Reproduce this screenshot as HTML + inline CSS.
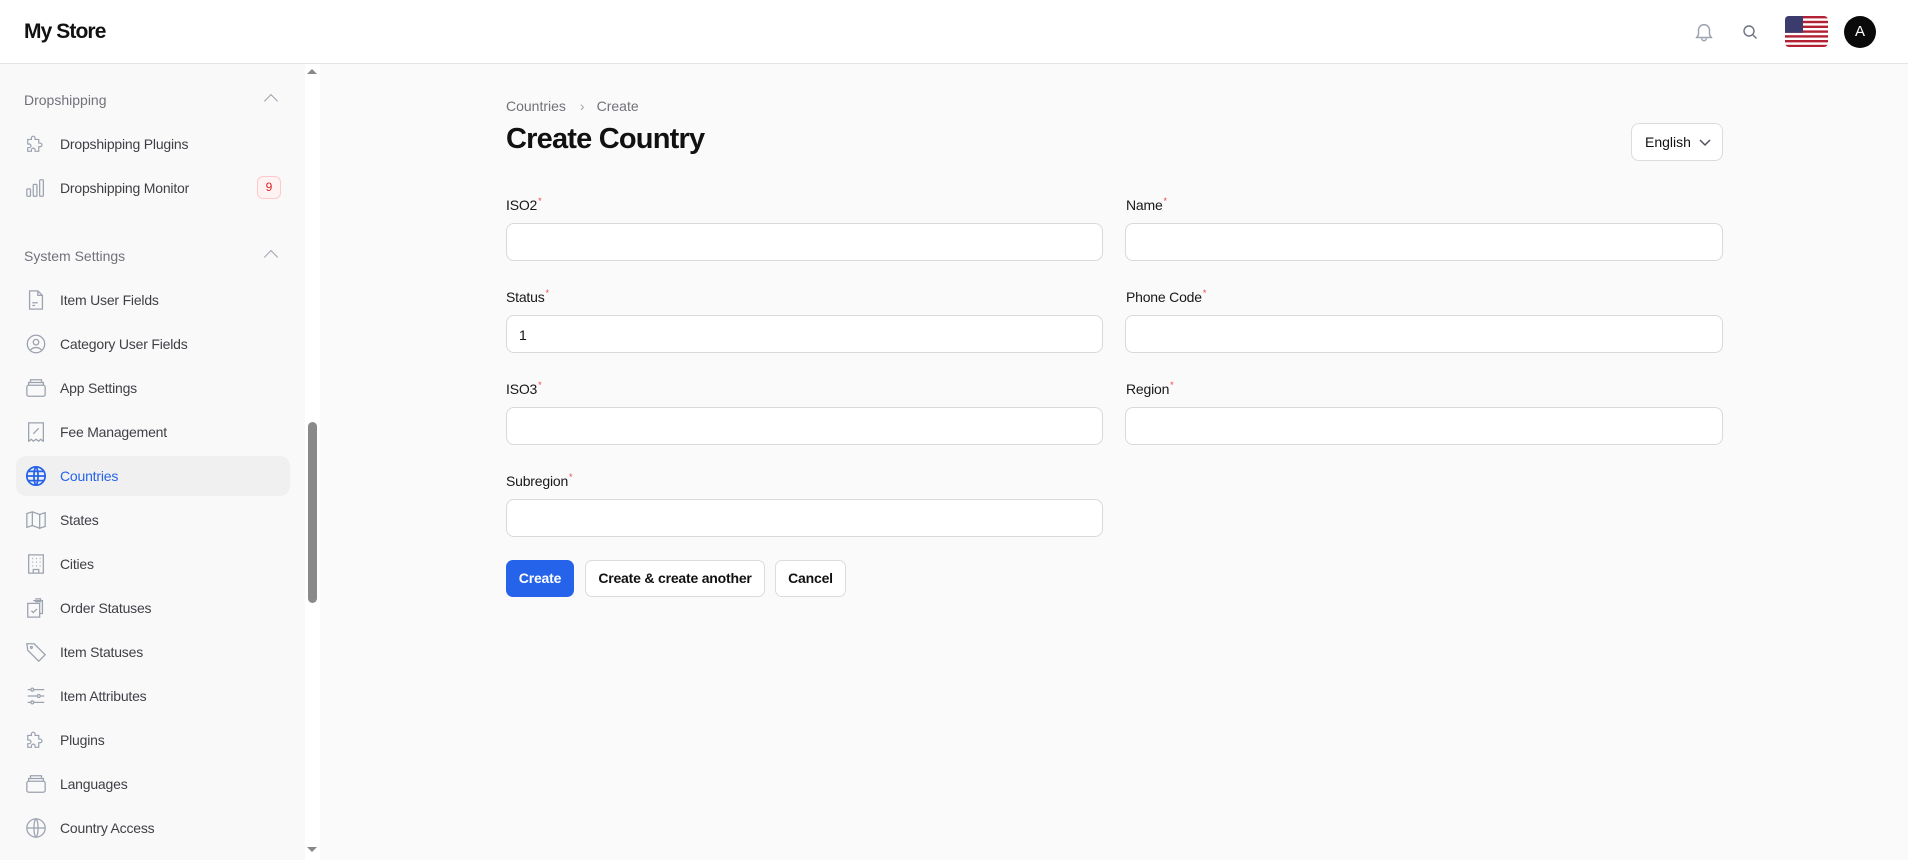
<!DOCTYPE html>
<html><head><meta charset="utf-8"><style>
*{box-sizing:border-box;margin:0;padding:0}
body{width:1908px;height:860px;overflow:hidden;background:#fafafa;font-family:"Liberation Sans",sans-serif;color:#111;position:relative}
.hdr{position:absolute;left:0;top:0;width:1908px;height:64px;background:#fff;border-bottom:1px solid #e4e4e7}
.logo{position:absolute;left:24px;top:20px;font-size:21px;font-weight:bold;letter-spacing:-0.9px}
.side{position:absolute;left:0;top:64px;width:305px;height:796px;background:#f9f9f9}
.track{position:absolute;left:305px;top:64px;width:15px;height:796px;background:#fff}
.thumb{position:absolute;left:308px;top:422px;width:9px;height:181px;border-radius:5px;background:#8a8a8a}
.sec{position:absolute;left:24px;font-size:14px;color:#71717a}
.chev{position:absolute;left:266px;width:10px;height:10px;border-left:1.5px solid #9ca3af;border-top:1.5px solid #9ca3af;transform:rotate(45deg)}
.it{position:absolute;left:60px;font-size:14px;color:#3f3f46;letter-spacing:-0.2px}
.ic{position:absolute;left:25px;width:22px;height:22px}
.act{position:absolute;left:16px;top:456px;width:274px;height:40px;border-radius:10px;background:#f0f0f0}
.badge{position:absolute;left:257px;top:176px;width:24px;height:23px;border:1px solid #fecaca;background:#fef2f2;border-radius:6px;color:#dc2626;font-size:12px;text-align:center;line-height:21px}
.lbl{position:absolute;font-size:14px;color:#18181b;letter-spacing:-0.2px}
.lbl sup{color:#ef4444;font-size:9px;vertical-align:6px;margin-left:1px}
.inp{position:absolute;height:38px;background:#fff;border:1px solid #d9d9dc;border-radius:8px;font-size:14px;padding:11px 12px}
.btn{position:absolute;top:560px;height:37px;border-radius:7px;font-size:14px;font-weight:bold;text-align:center;line-height:35px;letter-spacing:-0.2px}
</style></head><body>
<div class="hdr">
 <div class="logo">My Store</div>
 <svg style="position:absolute;left:1693px;top:20px" width="22" height="24" viewBox="0 0 24 24" fill="none" stroke="#9ca3af" stroke-width="1.6"><path d="M6 10a6 6 0 0 1 12 0v5l2 3H4l2-3z"/><path d="M9.5 19a2.5 2.5 0 0 0 5 0"/></svg>
 <svg style="position:absolute;left:1742px;top:24px" width="16" height="16" viewBox="0 0 16 16" fill="none" stroke="#6b7280" stroke-width="1.4"><circle cx="7" cy="7" r="5"/><path d="M11 11l3.5 3.5"/></svg>
 <svg style="position:absolute;left:1785px;top:16px" width="43" height="31" viewBox="0 0 43 31"><defs><clipPath id="c"><rect width="43" height="31" rx="4"/></clipPath></defs><g clip-path="url(#c)"><rect width="43" height="31" fill="#fff"/><g fill="#b22234"><rect y="0" width="43" height="2.4"/><rect y="4.8" width="43" height="2.4"/><rect y="9.6" width="43" height="2.4"/><rect y="14.4" width="43" height="2.4"/><rect y="19.2" width="43" height="2.4"/><rect y="24" width="43" height="2.4"/><rect y="28.8" width="43" height="2.4"/></g><rect width="18" height="16.8" fill="#3c3b6e"/></g></svg>
 <div style="position:absolute;left:1844px;top:16px;width:32px;height:32px;border-radius:50%;background:#0a0a0a;color:#fff;font-size:15px;text-align:center;line-height:32px">A</div>
</div>
<div class="side"></div>
<div class="track"></div>
<div style="position:absolute;left:307px;top:69px;border:5px solid transparent;border-bottom:5px solid #888;border-top:0"></div>
<div style="position:absolute;left:307px;top:847px;border:5px solid transparent;border-top:5px solid #888;border-bottom:0"></div>
<div class="thumb"></div>

<div class="sec" style="top:92px">Dropshipping</div><div class="chev" style="top:96px"></div>
<svg class="ic" style="top:133px" viewBox="0 0 24 24" fill="none" stroke="#9ca3af" stroke-width="1.3"><path d="M3 7h4V5.5a2 2 0 0 1 4 0V7h4v4h1.5a2 2 0 0 1 0 4H15v5h-4v-1.5a2 2 0 0 0-4 0V20H3v-4h1.5a2 2 0 0 0 0-4H3z"/></svg>
<div class="it" style="top:136px">Dropshipping Plugins</div>
<svg class="ic" style="top:177px" viewBox="0 0 24 24" fill="none" stroke="#9ca3af" stroke-width="1.4"><rect x="2" y="13" width="4" height="8" rx="1"/><rect x="9" y="8" width="4" height="13" rx="1"/><rect x="16" y="3" width="4" height="18" rx="1"/></svg>
<div class="it" style="top:180px">Dropshipping Monitor</div>
<div class="badge">9</div>

<div class="sec" style="top:248px">System Settings</div><div class="chev" style="top:252px"></div>
<div class="act"></div>
<svg class="ic" style="top:289px" viewBox="0 0 24 24" fill="none" stroke="#9ca3af" stroke-width="1.4"><path d="M5 2h9l5 5v15H5z"/><path d="M14 2v5h5M8 15h6M8 18h3"/></svg>
<div class="it" style="top:292px">Item User Fields</div>
<svg class="ic" style="top:333px" viewBox="0 0 24 24" fill="none" stroke="#9ca3af" stroke-width="1.4"><circle cx="12" cy="12" r="9.5"/><circle cx="12" cy="10" r="3"/><path d="M6 18.5c3-3.5 9-3.5 12 0"/></svg>
<div class="it" style="top:336px">Category User Fields</div>
<svg class="ic" style="top:377px" viewBox="0 0 24 24" fill="none" stroke="#9ca3af" stroke-width="1.4"><rect x="2" y="9" width="20" height="12" rx="2"/><path d="M4 9V6h16v3M6 6V3h12v3"/></svg>
<div class="it" style="top:380px">App Settings</div>
<svg class="ic" style="top:421px" viewBox="0 0 24 24" fill="none" stroke="#9ca3af" stroke-width="1.4"><path d="M4 2h16v20l-3-2-2 2-3-2-3 2-2-2-3 2z"/><path d="M9 14l6-6M9 9h.1M15 14h.1"/></svg>
<div class="it" style="top:424px">Fee Management</div>
<svg class="ic" style="top:465px" viewBox="0 0 24 24" fill="none" stroke="#2563eb" stroke-width="1.9"><circle cx="12" cy="12" r="10"/><path d="M2 12h20M12 2c3 3 3 17 0 20M12 2c-3 3-3 17 0 20M4 7h16M4 17h16"/></svg>
<div class="it" style="top:468px;color:#2563eb">Countries</div>
<svg class="ic" style="top:509px" viewBox="0 0 24 24" fill="none" stroke="#9ca3af" stroke-width="1.4"><path d="M2 5l6-2 8 3 6-2v15l-6 2-8-3-6 2z"/><path d="M8 3v16M16 6v16"/></svg>
<div class="it" style="top:512px">States</div>
<svg class="ic" style="top:553px" viewBox="0 0 24 24" fill="none" stroke="#9ca3af" stroke-width="1.4"><path d="M4 2h16v20H4zM9 22v-4h6v4M8 6h1M12 6h1M16 6h1M8 10h1M12 10h1M16 10h1M8 14h1M12 14h1M16 14h1"/></svg>
<div class="it" style="top:556px">Cities</div>
<svg class="ic" style="top:597px" viewBox="0 0 24 24" fill="none" stroke="#9ca3af" stroke-width="1.4"><path d="M9 4h10v14h-3M3 7h13v15H3zM11 2h6v3h-6M7 15l2 2 4-4"/></svg>
<div class="it" style="top:600px">Order Statuses</div>
<svg class="ic" style="top:641px" viewBox="0 0 24 24" fill="none" stroke="#9ca3af" stroke-width="1.4"><path d="M2 3h8l12 12-7 7L3 10z"/><circle cx="7" cy="7" r="1"/></svg>
<div class="it" style="top:644px">Item Statuses</div>
<svg class="ic" style="top:685px" viewBox="0 0 24 24" fill="none" stroke="#9ca3af" stroke-width="1.4"><path d="M3 5h18M3 12h18M3 19h18"/><circle cx="8" cy="5" r="1.6" fill="#f9f9f9"/><circle cx="15" cy="12" r="1.6" fill="#f9f9f9"/><circle cx="8" cy="19" r="1.6" fill="#f9f9f9"/></svg>
<div class="it" style="top:688px">Item Attributes</div>
<svg class="ic" style="top:729px" viewBox="0 0 24 24" fill="none" stroke="#9ca3af" stroke-width="1.3"><path d="M3 7h4V5.5a2 2 0 0 1 4 0V7h4v4h1.5a2 2 0 0 1 0 4H15v5h-4v-1.5a2 2 0 0 0-4 0V20H3v-4h1.5a2 2 0 0 0 0-4H3z"/></svg>
<div class="it" style="top:732px">Plugins</div>
<svg class="ic" style="top:773px" viewBox="0 0 24 24" fill="none" stroke="#9ca3af" stroke-width="1.4"><rect x="2" y="9" width="20" height="12" rx="2"/><path d="M4 9V6h16v3M6 6V3h12v3"/></svg>
<div class="it" style="top:776px">Languages</div>
<svg class="ic" style="top:817px" viewBox="0 0 24 24" fill="none" stroke="#9ca3af" stroke-width="1.4"><circle cx="12" cy="12" r="10"/><path d="M2 12h20M12 2c3 3 3 17 0 20M12 2c-3 3-3 17 0 20"/></svg>
<div class="it" style="top:820px">Country Access</div>

<div style="position:absolute;left:506px;top:98px;font-size:14px;color:#71717a">Countries<span style="margin:0 12px 0 14px;color:#a1a1aa">›</span>Create</div>
<div style="position:absolute;left:506px;top:123px;font-size:29px;font-weight:bold;letter-spacing:-0.8px">Create Country</div>
<div style="position:absolute;left:1631px;top:123px;width:92px;height:38px;background:#fff;border:1px solid #dcdce0;border-radius:8px;font-size:14px;padding:10px 0 0 13px">English<svg style="position:absolute;left:67px;top:15px" width="12" height="8" viewBox="0 0 12 8" fill="none" stroke="#52525b" stroke-width="1.5"><path d="M1 1l5 5 5-5"/></svg></div>

<div class="lbl" style="left:506px;top:196px">ISO2<sup>*</sup></div>
<div class="inp" style="left:506px;top:223px;width:597px"></div>
<div class="lbl" style="left:1126px;top:196px">Name<sup>*</sup></div>
<div class="inp" style="left:1125px;top:223px;width:598px"></div>
<div class="lbl" style="left:506px;top:288px">Status<sup>*</sup></div>
<div class="inp" style="left:506px;top:315px;width:597px">1</div>
<div class="lbl" style="left:1126px;top:288px">Phone Code<sup>*</sup></div>
<div class="inp" style="left:1125px;top:315px;width:598px"></div>
<div class="lbl" style="left:506px;top:380px">ISO3<sup>*</sup></div>
<div class="inp" style="left:506px;top:407px;width:597px"></div>
<div class="lbl" style="left:1126px;top:380px">Region<sup>*</sup></div>
<div class="inp" style="left:1125px;top:407px;width:598px"></div>
<div class="lbl" style="left:506px;top:472px">Subregion<sup>*</sup></div>
<div class="inp" style="left:506px;top:499px;width:597px"></div>

<div class="btn" style="left:506px;width:68px;background:#2563eb;color:#fff;border:1px solid #2563eb">Create</div>
<div class="btn" style="left:585px;width:180px;background:#fff;border:1px solid #dcdce0">Create &amp; create another</div>
<div class="btn" style="left:775px;width:71px;background:#fff;border:1px solid #dcdce0">Cancel</div>
</body></html>
